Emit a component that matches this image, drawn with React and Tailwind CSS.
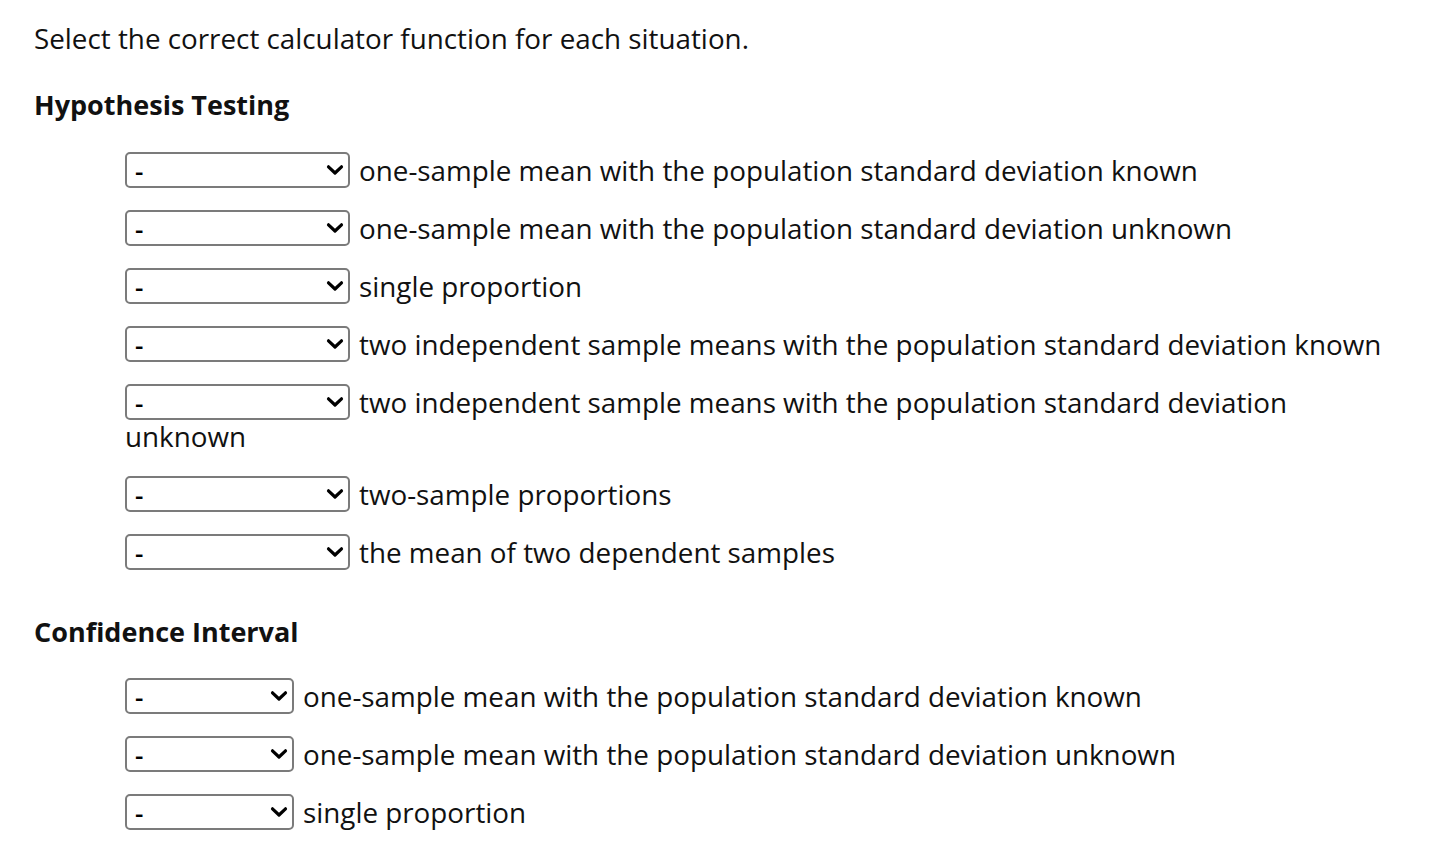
import React from 'react';

const options = ['-', 'Z-Test', 'T-Test', '1-PropZTest', '2-SampZTest', '2-SampTTest', '2-PropZTest', 'ZInterval', 'TInterval', '1-PropZInt'];

const testingRows = [
  'one-sample mean with the population standard deviation known',
  'one-sample mean with the population standard deviation unknown',
  'single proportion',
  'two independent sample means with the population standard deviation known',
  'two independent sample means with the population standard deviation unknown',
  'two-sample proportions',
  'the mean of two dependent samples',
];

const intervalRows = [
  'one-sample mean with the population standard deviation known',
  'one-sample mean with the population standard deviation unknown',
  'single proportion',
];

// floated so a wrapped label continues underneath the dropdown
const Dropdown = ({ wide }) => (
  <span
    className={`relative float-left h-[36px] -mt-[1px] -mb-[4px] mr-[9px] ${wide ? 'w-[225px]' : 'w-[169px]'}`}
  >
    <select
      defaultValue="-"
      className="appearance-none w-full h-full bg-white border-2 border-[#7b7b7b] rounded-[5px] pl-[8px] pr-8 pt-[2px] text-[26px] leading-none font-semibold text-black outline-none font-['Open_Sans',sans-serif]"
    >
      {options.map(o => (
        <option key={o} value={o}>{o}</option>
      ))}
    </select>
    <svg
      className="pointer-events-none absolute right-[6px] top-1/2 -translate-y-1/2 w-[18px] h-[12px]"
      viewBox="0 0 18 12"
      fill="none"
    >
      <path d="M2.5 2.8l6.5 6.2 6.5-6.2" stroke="#000" strokeWidth="3.2" strokeLinecap="round" strokeLinejoin="round" />
    </svg>
  </span>
);

const Row = ({ label, wide }) => (
  <div className="flow-root pl-[91px] mb-[24px] leading-[34px]">
    <Dropdown wide={wide} />
    {label}
  </div>
);

export default function App() {
  return (
    <div className="min-h-screen bg-white text-[#111] text-[27.8px] pl-[34px] pt-[21px] w-[1392px] font-['Open_Sans',sans-serif]">
      <p className="leading-[34px]">Select the correct calculator function for each situation.</p>

      <h3 className="font-bold text-[27px] leading-[34px] mt-[33px] mb-[31px]">Hypothesis Testing</h3>
      {testingRows.map((r, i) => (
        <Row key={i} label={r} wide />
      ))}

      <h3 className="font-bold text-[27px] leading-[34px] mt-[46px] mb-[30px]">Confidence Interval</h3>
      {intervalRows.map((r, i) => (
        <Row key={i} label={r} />
      ))}
    </div>
  );
}
